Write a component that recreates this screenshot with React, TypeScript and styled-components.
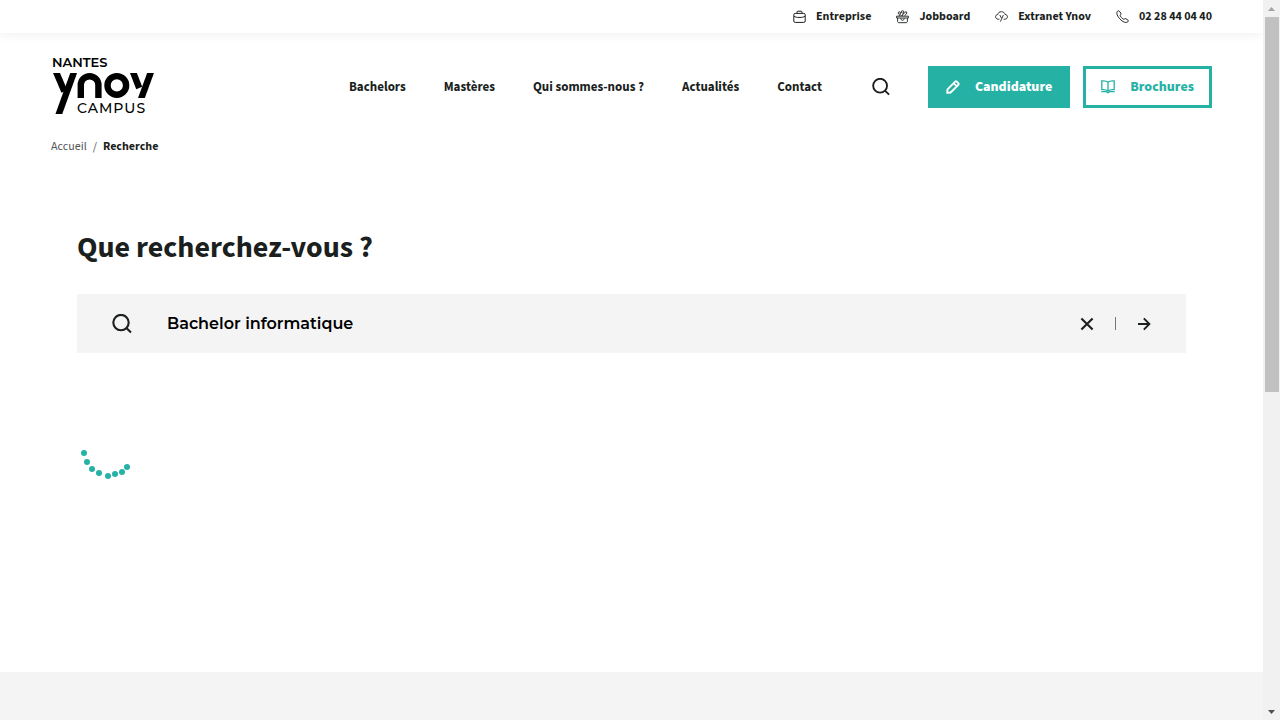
import React, { useState } from "react";
import styled, { createGlobalStyle } from "styled-components";

const ink = "#1b1f1e";
const teal = "#26b1a5";
const sans = `"Source Sans 3", "Source Sans Pro", "Noto Sans", sans-serif`;
const display = `Montserrat, Inter, "Open Sans", sans-serif`;

const GlobalStyle = createGlobalStyle`
  *, *::before, *::after { box-sizing: border-box; }
  body { margin: 0; background: #fff; color: ${ink}; font-family: ${sans}; }
  a { color: inherit; text-decoration: none; }
  button { font-family: inherit; cursor: pointer; }
  svg { display: block; flex: none; }
`;

const Shell = styled.div`
  display: flex;
  height: 100vh;
  overflow: hidden;
`;

const Page = styled.div`
  flex: 1;
  min-width: 0;
  display: flex;
  flex-direction: column;
`;

const TopBar = styled.nav`
  display: flex;
  justify-content: flex-end;
  gap: 25px;
  height: 33px;
  padding: 0 51px;
  box-shadow: 0 2px 12px rgba(0, 0, 0, 0.06);
`;

const TopLink = styled.a`
  display: flex;
  align-items: center;
  gap: 10px;
  height: 33px;
  font-size: 12px;
  font-weight: 700;
  line-height: 34px;
  white-space: nowrap;
`;

const Header = styled.header`
  display: flex;
  align-items: center;
  padding: 20px 51px 0;
`;

const LogoLink = styled.a`
  display: block;
`;

const MainNav = styled.nav`
  display: flex;
  gap: 38px;
  margin-left: auto;
`;

const NavLink = styled.a`
  font-size: 13px;
  font-weight: 700;
  line-height: 20px;
  white-space: nowrap;
`;

const IconButton = styled.button`
  display: flex;
  align-items: center;
  justify-content: center;
  padding: 0;
  border: 0;
  background: none;
  color: ${ink};
`;

const HeaderSearch = styled(IconButton)`
  margin: 0 38px 0 50px;
`;

const Actions = styled.div`
  display: flex;
  gap: 13px;
`;

const Action = styled.a<{ $outlined?: boolean }>`
  display: flex;
  align-items: center;
  gap: 15px;
  height: 42px;
  padding: 0 15px;
  border: 3px solid ${teal};
  background: ${(p) => (p.$outlined ? "#fff" : teal)};
  color: ${(p) => (p.$outlined ? teal : "#fff")};
  font-size: 14px;
  font-weight: 800;
  line-height: 20px;
  white-space: nowrap;
`;

const Breadcrumb = styled.nav`
  display: flex;
  gap: 6px;
  padding: 16px 51px 0;
  font-size: 12px;
  line-height: 20px;
  color: #555;

  strong { color: ${ink}; font-weight: 700; }
`;

const Main = styled.main`
  flex: 1;
  padding: 71px 77px 0;
`;

const Title = styled.h1`
  margin: 0;
  font-size: 30px;
  font-weight: 700;
  line-height: 40px;
`;

const SearchForm = styled.form`
  display: flex;
  align-items: center;
  height: 59px;
  margin-top: 26px;
  padding: 0 35px;
  background: #f4f4f4;
`;

const SearchInput = styled.input`
  flex: 1;
  min-width: 0;
  margin-left: 35px;
  padding: 0;
  border: 0;
  outline: 0;
  background: none;
  color: #000;
  font-family: ${display};
  font-size: 16px;
  font-weight: 600;
  line-height: 24px;
`;

const Divider = styled.span`
  width: 1px;
  height: 13px;
  margin: 0 21px;
  background: #777;
`;

const Spinner = styled.div`
  margin-top: 72px;
  color: ${teal};
`;

const Footer = styled.footer`
  height: 48px;
  background: #f4f4f4;
`;

const ScrollTrack = styled.div`
  display: flex;
  flex-direction: column;
  align-items: center;
  width: 17px;
  background: #f1f1f1;
`;

const ScrollArrow = styled.div`
  display: flex;
  align-items: center;
  justify-content: center;
  height: 17px;
`;

const ScrollSpace = styled.div`
  flex: 1;
  width: 100%;
  padding: 0 1px 0 2px;
`;

const ScrollThumb = styled.div`
  height: 375px;
  background: #c1c1c1;
`;

const Briefcase = () => (
  <svg width="13" height="14" viewBox="0 0 13 14" fill="none" stroke="currentColor">
    <rect x="0.8" y="3.4" width="11.4" height="9" rx="1.4" />
    <path d="M4 3.4V2.2C4 1.5 4.4 1.2 5 1.2H8C8.6 1.2 9 1.5 9 2.2V3.4M1 6.2C2.6 7.2 4 7.4 5 7.4H8C9 7.4 10.4 7.2 12 6.2" />
  </svg>
);

const Basket = () => (
  <svg width="13" height="14" viewBox="0 0 13 14" fill="none" stroke="currentColor" strokeWidth="0.9">
    <path d="M0.6 6.2H12.4V8H0.6ZM1.6 8V11.2C1.6 12.2 2.2 12.7 3 12.7H10C10.8 12.7 11.4 12.2 11.4 11.2V8M4.8 8.2C4.8 11 8.2 11 8.2 8.2" />
    <circle cx="3.4" cy="3" r="1.2" />
    <circle cx="6.6" cy="1.9" r="1.2" />
    <path d="M2.6 6L4.4 4.6L5.6 6M6.2 6L7 4L10.2 1.6L11 3L8.6 5.8" />
  </svg>
);

const CloudTree = () => (
  <svg width="13" height="14" viewBox="0 0 13 14" fill="none" stroke="currentColor" strokeWidth="0.9">
    <path d="M4.4 9.2H3.2C1.6 9.2 0.6 8.2 0.6 6.8C0.6 5.4 1.6 4.6 2.8 4.5C3.1 2.8 4.4 1.7 6.4 1.7C8.4 1.7 9.7 2.9 10 4.4C11.5 4.5 12.4 5.4 12.4 6.8C12.4 8.2 11.4 9.2 9.9 9.2H8.6" />
    <path d="M4.8 5L6.4 8M8.4 5L5.4 11.6" />
  </svg>
);

const Phone = () => (
  <svg width="13" height="14" viewBox="0 0 13 14" fill="none" stroke="currentColor" strokeLinejoin="round">
    <path d="M1.4 1.4C0.4 2.6 0.5 5 3.7 8.7C7 12.4 10.1 13.1 11.8 11.8C12.5 11.2 12.5 10.6 11.9 10.1L9.9 8.7C9.4 8.4 8.9 8.5 8.4 9C7.9 9.4 7.4 9.3 6.8 8.8C5.8 8 5 7.1 4.4 6.2C4 5.6 4.1 5.1 4.6 4.7C5.1 4.2 5.1 3.7 4.8 3.2L3.5 1.3C2.9 0.5 2 0.6 1.4 1.4Z" />
  </svg>
);

const Magnifier = ({ size }: { size: number }) => (
  <svg width={size} height={size} viewBox="0 0 20 20" fill="none" stroke="currentColor" strokeWidth="2.1">
    <circle cx="9" cy="8.6" r="7.7" />
    <path d="M14.4 14L19 18.4" />
  </svg>
);

const Pencil = () => (
  <svg width="14" height="14" viewBox="0 0 14 14" fill="none" stroke="currentColor" strokeWidth="1.9" strokeLinejoin="round">
    <path d="M1.2 12.8L1.5 9.4L9.2 1.7C9.7 1.2 10.3 1.2 10.8 1.7L12.3 3.2C12.8 3.7 12.8 4.3 12.3 4.8L4.6 12.5ZM7.8 3.4L10.6 6.2" />
  </svg>
);

const Book = () => (
  <svg width="14" height="14" viewBox="0 0 14 14" fill="none" stroke="currentColor" strokeWidth="1.3">
    <path d="M7 2.2C5.6 0.9 3 0.7 0.8 0.9V9.6C3 9.4 5.6 9.7 7 10.9C8.4 9.7 11 9.4 13.2 9.6V0.9C11 0.7 8.4 0.9 7 2.2ZM7 2.2V11M0.4 11.6H5.2L7 12.8L8.8 11.6H13.6" />
  </svg>
);

const Cross = () => (
  <svg width="14" height="14" viewBox="0 0 14 14" fill="none" stroke="currentColor" strokeWidth="2.1">
    <path d="M1.4 1.4L12.6 12.6M12.6 1.4L1.4 12.6" />
  </svg>
);

const Arrow = () => (
  <svg width="14" height="14" viewBox="0 0 14 14" fill="none" stroke="currentColor" strokeWidth="1.9">
    <path d="M1 7H12M6.8 1.4L12.4 7L6.8 12.6" />
  </svg>
);

const Logo = () => (
  <svg width="104" height="68" viewBox="0 0 104 68" role="img" aria-label="Nantes Ynov Campus">
    <clipPath id="mark-full"><rect y="20" width="104" height="41" /></clipPath>
    <clipPath id="mark-short"><rect y="20" width="104" height="25" /></clipPath>
    <text x="1" y="14" fontFamily={display} fontSize="13" fontWeight="600">NANTES</text>
    <g fill="none" stroke="#000" strokeWidth="6.4">
      <path d="M24.1 16L6.4 65" clipPath="url(#mark-full)" />
      <g clipPath="url(#mark-short)">
        <path d="M3.8 16L13.4 38.4" />
        <path d="M29.8 50V32A8.8 8.8 0 0 1 47.4 32V50" />
        <path d="M80.9 16L88.2 35" />
        <path d="M101 16L88.6 50" />
      </g>
      <circle cx="65.8" cy="32.4" r="9.3" />
    </g>
    <text x="26" y="60" fontFamily={display} fontSize="14" fontWeight="500" letterSpacing="1">CAMPUS</text>
  </svg>
);

const dots = [
  [7, 18], [10, 27], [15, 34], [22, 38], [31, 41], [38, 39], [45, 37], [50, 32],
];

const topLinks = [
  { label: "Entreprise", icon: <Briefcase /> },
  { label: "Jobboard", icon: <Basket /> },
  { label: "Extranet Ynov", icon: <CloudTree /> },
  { label: "02 28 44 04 40", icon: <Phone /> },
];

const navLinks = ["Bachelors", "Mastères", "Qui sommes-nous ?", "Actualités", "Contact"];

export default function App() {
  const [query, setQuery] = useState("Bachelor informatique");

  return (
    <Shell>
      <GlobalStyle />
      <Page>
        <TopBar>
          {topLinks.map((l) => (
            <TopLink href="#" key={l.label}>
              {l.icon}
              {l.label}
            </TopLink>
          ))}
        </TopBar>
        <Header>
          <LogoLink href="#"><Logo /></LogoLink>
          <MainNav>
            {navLinks.map((l) => <NavLink href="#" key={l}>{l}</NavLink>)}
          </MainNav>
          <HeaderSearch type="button" aria-label="Rechercher"><Magnifier size={18} /></HeaderSearch>
          <Actions>
            <Action href="#"><Pencil />Candidature</Action>
            <Action href="#" $outlined><Book />Brochures</Action>
          </Actions>
        </Header>
        <Breadcrumb>
          <a href="#">Accueil</a>
          <span>/</span>
          <strong>Recherche</strong>
        </Breadcrumb>
        <Main>
          <Title>Que recherchez-vous ?</Title>
          <SearchForm onSubmit={(e) => e.preventDefault()}>
            <Magnifier size={20} />
            <SearchInput
              aria-label="Que recherchez-vous ?"
              value={query}
              onChange={(e) => setQuery(e.target.value)}
            />
            <IconButton type="button" aria-label="Effacer" onClick={() => setQuery("")}><Cross /></IconButton>
            <Divider />
            <IconButton type="submit" aria-label="Lancer la recherche"><Arrow /></IconButton>
          </SearchForm>
          <Spinner role="status" aria-label="Chargement">
            <svg width="60" height="60" viewBox="0 10 60 60" fill="currentColor">
              {dots.map(([x, y]) => <circle key={x} cx={x} cy={y + 20} r="3" />)}
            </svg>
          </Spinner>
        </Main>
        <Footer />
      </Page>
      <ScrollTrack aria-hidden="true">
        <ScrollArrow>
          <svg width="7" height="4" viewBox="0 0 7 4"><path d="M3.5 0L7 4H0Z" fill="#a3a3a3" /></svg>
        </ScrollArrow>
        <ScrollSpace><ScrollThumb /></ScrollSpace>
        <ScrollArrow>
          <svg width="7" height="4" viewBox="0 0 7 4"><path d="M0 0H7L3.5 4Z" fill="#505050" /></svg>
        </ScrollArrow>
      </ScrollTrack>
    </Shell>
  );
}
